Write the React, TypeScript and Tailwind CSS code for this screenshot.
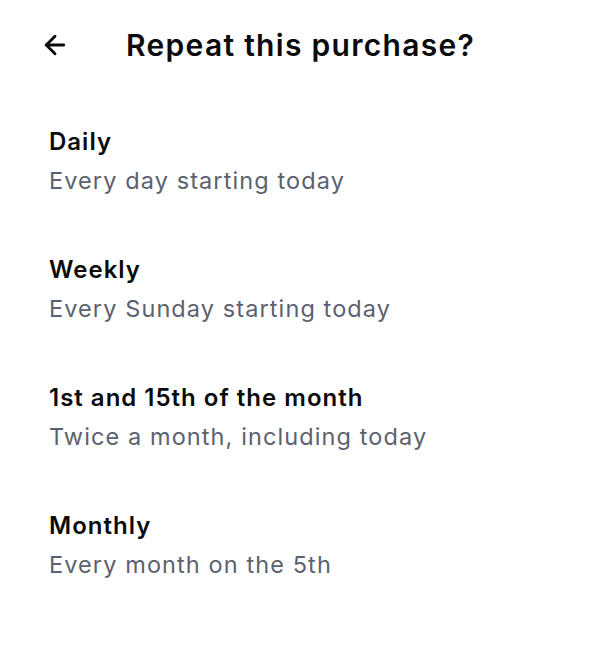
import { ArrowLeft } from "lucide-react";

const options = [
  { title: "Daily", desc: "Every day starting today" },
  { title: "Weekly", desc: "Every Sunday starting today" },
  { title: "1st and 15th of the month", desc: "Twice a month, including today" },
  { title: "Monthly", desc: "Every month on the 5th" },
];

export default function App() {
  return (
    <div className="w-[596px] h-[652px] bg-white font-['Inter',sans-serif] text-[#0a0b0d]">
      <header className="h-[90px] flex items-center pl-[40px]">
        <ArrowLeft size={30} strokeWidth={2.3} />
        <h1 className="ml-[56px] text-[30px] font-semibold tracking-[1.3px]">Repeat this purchase?</h1>
      </header>

      <div className="pt-[36px] pl-[49px] flex flex-col gap-[57px]">
        {options.map((o) => (
          <section key={o.title}>
            <h2 className="text-[24px] leading-[32px] font-semibold tracking-[1px]">{o.title}</h2>
            <p className="mt-[7px] text-[23.5px] leading-[32px] tracking-[1.1px] text-[#5b616e]">{o.desc}</p>
          </section>
        ))}
      </div>
    </div>
  );
}
